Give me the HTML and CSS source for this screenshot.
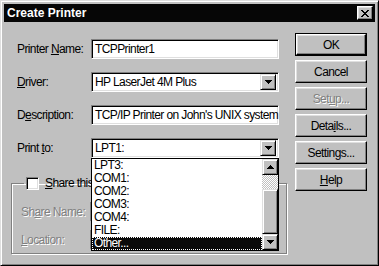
FILE: index.html
```html
<!DOCTYPE html>
<html>
<head>
  <title>Create Printer</title>
  <link rel="stylesheet" href="styles.css">
</head>
<body>
  <div class="window">
    <div class="titlebar">
      <span class="title">Create Printer</span>
      <div class="close">
        <svg width="8" height="7" viewBox="0 0 8 7" shape-rendering="crispEdges"><path d="M0 0h2v1h1v1h2v-1h1v-1h2v1h-1v1h-1v1h-1v1h1v1h1v1h1v1h-2v-1h-1v-1h-2v1h-1v1h-2v-1h1v-1h1v-1h1v-1h-1v-1h-1v-1h-1z" fill="#000"/></svg>
      </div>
    </div>
    <div class="content">
      <div class="form">
        <div class="row">
          <label>Printer <u>N</u>ame:</label>
          <div class="field">TCPPrinter1</div>
        </div>
        <div class="row">
          <label><u>D</u>river:</label>
          <div class="field combo">
            <span>HP LaserJet 4M Plus</span>
            <div class="arrow-btn"><svg width="7" height="4" viewBox="0 0 7 4" shape-rendering="crispEdges"><path d="M0 0h7v1h-1v1h-1v1h-1v1h-1v-1h-1v-1h-1v-1h-1z"/></svg></div>
          </div>
        </div>
        <div class="row">
          <label>D<u>e</u>scription:</label>
          <div class="field">TCP/IP Printer on John's UNIX system</div>
        </div>
        <div class="row">
          <label>Print <u>t</u>o:</label>
          <div class="field combo">
            <span>LPT1:</span>
            <div class="arrow-btn"><svg width="7" height="4" viewBox="0 0 7 4" shape-rendering="crispEdges"><path d="M0 0h7v1h-1v1h-1v1h-1v1h-1v-1h-1v-1h-1v-1h-1z"/></svg></div>
            <div class="droplist">
              <ul class="items">
                <li>LPT3:</li>
                <li>COM1:</li>
                <li>COM2:</li>
                <li>COM3:</li>
                <li>COM4:</li>
                <li>FILE:</li>
                <li class="selected"><span>Other...</span></li>
              </ul>
              <div class="scrollbar">
                <div class="arrow-btn sb-btn"><svg width="7" height="4" viewBox="0 0 7 4" shape-rendering="crispEdges"><path d="M3 0h1v1h1v1h1v1h1v1h-7v-1h1v-1h1v-1h1z"/></svg></div>
                <div class="track"></div>
                <div class="thumb"></div>
                <div class="arrow-btn sb-btn"><svg width="7" height="4" viewBox="0 0 7 4" shape-rendering="crispEdges"><path d="M0 0h7v1h-1v1h-1v1h-1v1h-1v-1h-1v-1h-1v-1h-1z"/></svg></div>
              </div>
            </div>
          </div>
        </div>
        <fieldset class="group">
          <legend><span class="check"></span><span class="share-text"><u>S</u>hare this printer on the network</span></legend>
          <div class="row">
            <label class="disabled">Sh<u>a</u>re Name:</label>
            <div class="field off"></div>
          </div>
          <div class="row">
            <label class="disabled"><u>L</u>ocation:</label>
            <div class="field off"></div>
          </div>
        </fieldset>
      </div>
      <div class="buttons">
        <div class="btn default"><span>OK</span></div>
        <div class="btn">Cancel</div>
        <div class="btn disabled">Set<u>u</u>p...</div>
        <div class="btn">Deta<u>i</u>ls...</div>
        <div class="btn">Settings...</div>
        <div class="btn"><u>H</u>elp</div>
      </div>
    </div>
  </div>
</body>
</html>
```

FILE: styles.css
```css
    body {
      margin: 0;
      background-color: #c0c0c0;
      font-family: "Liberation Sans", Arial, sans-serif;
      font-size: 12px;
      letter-spacing: -0.6px;
      color: #000;
    }
    .window {
      width: 379px;
      height: 266px;
      box-sizing: border-box;
      background-color: #c0c0c0;
      border: 1px solid;
      border-color: #dfdfdf #000 #000 #dfdfdf;
      box-shadow: inset 1px 1px #fff, inset -1px -1px #808080;
      padding: 3px;
      overflow: hidden;
    }
    .titlebar {
      height: 18px;
      background-color: #060606;
      display: flex;
      align-items: center;
      justify-content: space-between;
    }
    .title {
      font-weight: bold;
      letter-spacing: 0;
      color: #fff;
      padding-left: 3px;
      line-height: 18px;
    }
    .close {
      width: 16px;
      height: 14px;
      box-sizing: border-box;
      margin-right: 2px;
      background-color: #c0c0c0;
      border: 1px solid;
      border-color: #fff #000 #000 #fff;
      box-shadow: inset -1px -1px #808080, inset 1px 1px #dfdfdf;
      display: flex;
      align-items: center;
      justify-content: center;
    }
    .close svg {
      margin-left: -1px;
    }
    .content {
      display: flex;
      padding-left: 7px;
    }
    .form {
      width: 271px;
      padding-top: 17px;
      display: flex;
      flex-direction: column;
      gap: 13px;
    }
    .row {
      display: flex;
      align-items: center;
      padding-left: 6px;
      height: 20px;
    }
    .row label {
      width: 74px;
      flex: none;
      white-space: nowrap;
    }
    .field {
      position: relative;
      width: 188px;
      height: 20px;
      box-sizing: border-box;
      background-color: #fff;
      border: 1px solid;
      border-color: #808080 #fff #fff #808080;
      box-shadow: inset 1px 1px #000, inset -1px -1px #dfdfdf;
      padding: 0 3px;
      line-height: 18px;
      white-space: nowrap;
    }
    .field.off {
      background-color: #c0c0c0;
    }
    .combo {
      display: flex;
      justify-content: space-between;
      align-items: center;
      padding-right: 2px;
    }
    .arrow-btn {
      width: 16px;
      height: 16px;
      box-sizing: border-box;
      background-color: #c0c0c0;
      border: 1px solid;
      border-color: #dfdfdf #000 #000 #dfdfdf;
      box-shadow: inset 1px 1px #fff, inset -1px -1px #808080;
      display: flex;
      align-items: center;
      justify-content: center;
      flex: none;
    }
    .droplist {
      position: absolute;
      left: -1px;
      top: 19px;
      width: 188px;
      height: 93px;
      box-sizing: border-box;
      border: 1px solid #000;
      background-color: #fff;
      display: flex;
      z-index: 2;
    }
    .items {
      list-style: none;
      margin: 0;
      padding: 0;
      flex: 1;
    }
    .items li {
      height: 13px;
      line-height: 13px;
      padding-left: 2px;
    }
    .items li.selected {
      background-color: #0a0a0a;
      color: #fff;
      outline: 1px dotted #fff;
      outline-offset: -1px;
    }
    .scrollbar {
      width: 16px;
      display: flex;
      flex-direction: column;
    }
    .track {
      height: 14px;
      background: repeating-conic-gradient(#fff 0 25%, #c0c0c0 0 50%) 0 0 / 2px 2px;
    }
    .thumb {
      flex: 1;
      background-color: #c0c0c0;
      border: 1px solid;
      border-color: #dfdfdf #000 #000 #dfdfdf;
      box-shadow: inset 1px 1px #fff, inset -1px -1px #808080;
    }
    .group {
      margin: 6px 0 0 0;
      padding: 0 8px 3px 9px;
      width: 271px;
      box-sizing: border-box;
      border: 1px solid #808080;
      box-shadow: 1px 1px 0 #fff, inset 1px 1px 0 #fff;
      display: flex;
      flex-direction: column;
      gap: 8px;
    }
    .group legend {
      display: flex;
      align-items: center;
      gap: 6px;
      padding: 0 2px;
      margin-left: 3px;
      line-height: 13px;
      white-space: nowrap;
    }
    .share-text {
      max-width: 47px;
      overflow: hidden;
    }
    .check {
      width: 13px;
      height: 13px;
      box-sizing: border-box;
      background-color: #fff;
      border: 1px solid;
      border-color: #808080 #fff #fff #808080;
      box-shadow: inset 1px 1px #000, inset -1px -1px #dfdfdf;
    }
    .group .row {
      padding-left: 0;
    }
    .group .row:first-of-type {
      margin-top: 12px;
    }
    .group .row label {
      width: 69px;
    }
    .disabled {
      color: #808080;
      text-shadow: 1px 1px 0 #fff;
    }
    .buttons {
      margin-left: 13px;
      padding-top: 11px;
      display: flex;
      flex-direction: column;
      gap: 4px;
    }
    .btn {
      width: 72px;
      height: 23px;
      box-sizing: border-box;
      border: 1px solid;
      border-color: #fff #000 #000 #fff;
      box-shadow: inset -1px -1px #808080, inset 1px 1px #dfdfdf;
      display: flex;
      align-items: center;
      justify-content: center;
    }
    .btn.default {
      border: 1px solid #000;
      box-shadow: none;
    }
    .btn.default span {
      width: 100%;
      height: 100%;
      box-sizing: border-box;
      border: 1px solid;
      border-color: #fff #000 #000 #fff;
      box-shadow: inset -1px -1px #808080, inset 1px 1px #dfdfdf;
      display: flex;
      align-items: center;
      justify-content: center;
    }
```
